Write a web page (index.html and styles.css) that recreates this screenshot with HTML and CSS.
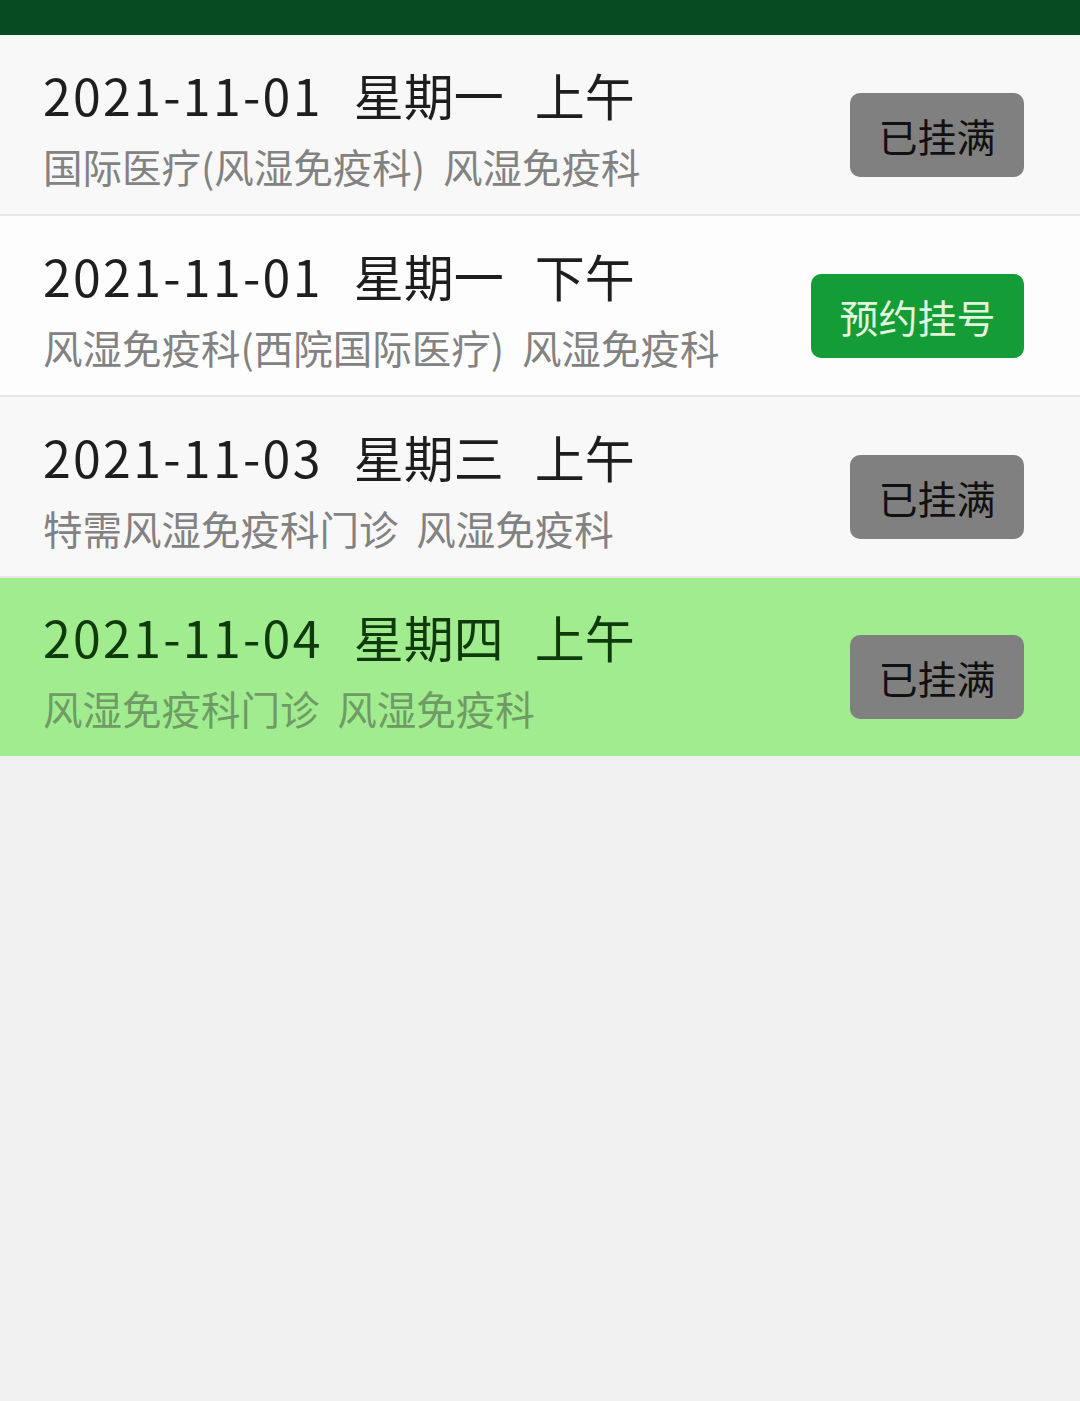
FILE: index.html
```html
<!DOCTYPE html>
<html>
<head>
    <title>预约挂号</title>
    <link rel="stylesheet" href="styles.css">
</head>
<body>
    <div class="topbar"></div>

    <div class="list">
        <div class="row">
            <div class="info">
                <div class="title"><span class="date">2021-11-01</span><span>星期一</span><span>上午</span></div>
                <div class="dept">国际医疗(风湿免疫科)&nbsp; 风湿免疫科</div>
            </div>
            <button type="button" class="btn full">已挂满</button>
        </div>
        <div class="row white">
            <div class="info">
                <div class="title"><span class="date">2021-11-01</span><span>星期一</span><span>下午</span></div>
                <div class="dept">风湿免疫科(西院国际医疗)&nbsp; 风湿免疫科</div>
            </div>
            <button type="button" class="btn book">预约挂号</button>
        </div>
        <div class="row">
            <div class="info">
                <div class="title"><span class="date">2021-11-03</span><span>星期三</span><span>上午</span></div>
                <div class="dept">特需风湿免疫科门诊&nbsp; 风湿免疫科</div>
            </div>
            <button type="button" class="btn full">已挂满</button>
        </div>
        <div class="row selected">
            <div class="info">
                <div class="title"><span class="date">2021-11-04</span><span>星期四</span><span>上午</span></div>
                <div class="dept">风湿免疫科门诊&nbsp; 风湿免疫科</div>
            </div>
            <button type="button" class="btn full">已挂满</button>
        </div>
    </div>
</body>
</html>
```

FILE: styles.css
```css
body {
    margin: 0;
    background-color: #f0f0f0;
    font-family: "Noto Sans CJK SC", "Noto Sans", sans-serif;
}

.topbar {
    height: 35px;
    background-color: #044d23;
}

/* lista de horarios */
.row {
    display: flex;
    align-items: center;
    justify-content: space-between;
    height: 181px;
    box-sizing: border-box;
    padding: 0 56px 0 43px;
    background-color: #f8f8f8;
    border-bottom: 2px solid #e6e6e6;
}

.row.white {
    background-color: #fdfdfd;
}

.row.selected {
    height: 178px;
    background-color: #a2ec90;
    border-bottom: none;
}

.info {
    margin-top: 10px;
}

.title {
    font-size: 50px;
    line-height: 72px;
    color: #1e1e1e;
}

.title span {
    margin-right: 31px;
}

.title .date {
    letter-spacing: 2.3px;
}

.selected .title {
    color: #0f3a0c;
}

.dept {
    font-size: 39.5px;
    line-height: 72px;
    color: #828282;
}

.selected .dept {
    color: #6f9b65;
}

.btn {
    margin-top: 20px;
    height: 84px;
    border: none;
    border-radius: 10px;
    padding: 0;
    font-family: inherit;
    font-size: 39px;
}

.btn.full {
    width: 174px;
    background-color: #808080;
    color: #111;
}

.btn.book {
    width: 213px;
    background-color: #149c37;
    color: #e2f6de;
}
```
